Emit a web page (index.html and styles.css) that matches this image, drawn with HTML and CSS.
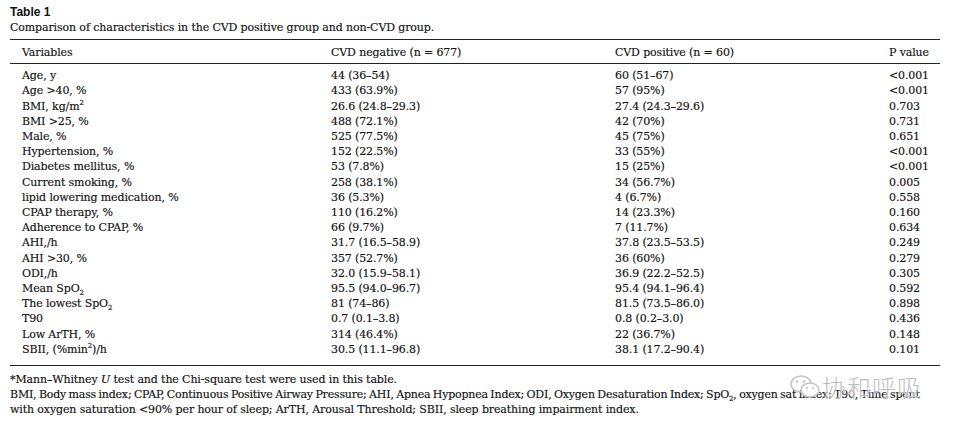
FILE: index.html
```html
<!DOCTYPE html>
<html>
<head>
<meta charset="utf-8">
<link rel="stylesheet" href="styles.css">
</head>
<body>
<div class="page">
  <div class="title">Table 1</div>
  <div class="caption">Comparison of characteristics in the CVD positive group and non-CVD group.</div>
  <table class="data">
    <colgroup>
      <col class="c1"><col class="c2"><col class="c3"><col class="c4">
    </colgroup>
    <thead>
      <tr><th>Variables</th><th>CVD negative (n = 677)</th><th>CVD positive (n = 60)</th><th>P value</th></tr>
    </thead>
    <tbody>
      <tr class="first"><td>Age, y</td><td>44 (36–54)</td><td>60 (51–67)</td><td>&lt;0.001</td></tr>
      <tr><td>Age &gt;40, %</td><td>433 (63.9%)</td><td>57 (95%)</td><td>&lt;0.001</td></tr>
      <tr><td>BMI, kg/m<sup>2</sup></td><td>26.6 (24.8–29.3)</td><td>27.4 (24.3–29.6)</td><td>0.703</td></tr>
      <tr><td>BMI &gt;25, %</td><td>488 (72.1%)</td><td>42 (70%)</td><td>0.731</td></tr>
      <tr><td>Male, %</td><td>525 (77.5%)</td><td>45 (75%)</td><td>0.651</td></tr>
      <tr><td>Hypertension, %</td><td>152 (22.5%)</td><td>33 (55%)</td><td>&lt;0.001</td></tr>
      <tr><td>Diabetes mellitus, %</td><td>53 (7.8%)</td><td>15 (25%)</td><td>&lt;0.001</td></tr>
      <tr><td>Current smoking, %</td><td>258 (38.1%)</td><td>34 (56.7%)</td><td>0.005</td></tr>
      <tr><td>lipid lowering medication, %</td><td>36 (5.3%)</td><td>4 (6.7%)</td><td>0.558</td></tr>
      <tr><td>CPAP therapy, %</td><td>110 (16.2%)</td><td>14 (23.3%)</td><td>0.160</td></tr>
      <tr><td>Adherence to CPAP, %</td><td>66 (9.7%)</td><td>7 (11.7%)</td><td>0.634</td></tr>
      <tr><td>AHI,/h</td><td>31.7 (16.5–58.9)</td><td>37.8 (23.5–53.5)</td><td>0.249</td></tr>
      <tr><td>AHI &gt;30, %</td><td>357 (52.7%)</td><td>36 (60%)</td><td>0.279</td></tr>
      <tr><td>ODI,/h</td><td>32.0 (15.9–58.1)</td><td>36.9 (22.2–52.5)</td><td>0.305</td></tr>
      <tr><td>Mean SpO<sub>2</sub></td><td>95.5 (94.0–96.7)</td><td>95.4 (94.1–96.4)</td><td>0.592</td></tr>
      <tr><td>The lowest SpO<sub>2</sub></td><td>81 (74–86)</td><td>81.5 (73.5–86.0)</td><td>0.898</td></tr>
      <tr><td>T90</td><td>0.7 (0.1–3.8)</td><td>0.8 (0.2–3.0)</td><td>0.436</td></tr>
      <tr><td>Low ArTH, %</td><td>314 (46.4%)</td><td>22 (36.7%)</td><td>0.148</td></tr>
      <tr class="last"><td>SBII, (%min<sup>2</sup>)/h</td><td>30.5 (11.1–96.8)</td><td>38.1 (17.2–90.4)</td><td>0.101</td></tr>
    </tbody>
  </table>
  <div class="notes">
    <p>*Mann–Whitney <i>U</i> test and the Chi-square test were used in this table.</p>
    <p><span class="line">BMI, Body mass index; CPAP, Continuous Positive Airway Pressure; AHI, Apnea Hypopnea Index; ODI, Oxygen Desaturation Index; SpO<sub>2</sub>, oxygen sat index; T90, Time spent</span><br>with oxygen saturation &lt;90% per hour of sleep; ArTH, Arousal Threshold; SBII, sleep breathing impairment index.</p>
    <div class="watermark">
      <svg class="wm-logo" width="30" height="24" viewBox="0 0 30 24">
        <ellipse cx="11" cy="9" rx="10" ry="8" fill="none" stroke="#c4c4c4" stroke-width="1.5"/>
        <ellipse cx="20" cy="15" rx="9" ry="7" fill="#fff" stroke="#c4c4c4" stroke-width="1.5"/>
        <circle cx="7" cy="6.5" r="1.3" fill="#c4c4c4"/>
        <circle cx="14" cy="6.5" r="1.3" fill="#c4c4c4"/>
        <circle cx="17" cy="13" r="1.1" fill="#c4c4c4"/>
        <circle cx="23" cy="13" r="1.1" fill="#c4c4c4"/>
      </svg>
      <span class="wm-text">协和呼吸</span>
    </div>
  </div>
</div>
</body>
</html>
```

FILE: styles.css
```css
html, body {
  margin: 0;
  padding: 0;
  background: #ffffff;
}
.page {
  width: 930px;
  padding: 5px 0 0 10px;
  font-family: "DejaVu Serif", "Liberation Serif", serif;
  color: #111;
  letter-spacing: -0.12px;
  -webkit-text-stroke: 0.15px #111;
}
.title {
  font-weight: bold;
  font-size: 12px;
  line-height: 14px;
  letter-spacing: 0;
  font-family: "Liberation Sans", "DejaVu Sans", sans-serif;
  -webkit-text-stroke: 0;
}
.caption {
  font-size: 11px;
  line-height: 15px;
  margin-top: 1px;
}
.data {
  width: 930px;
  border-collapse: collapse;
  table-layout: fixed;
  margin-top: 4px;
  font-size: 11px;
  border-top: 1.5px solid #222;
  border-bottom: 1.5px solid #222;
}
.c1 { width: 321px; }
.c2 { width: 284px; }
.c3 { width: 274px; }
.c4 { width: 51px; }
th, td {
  text-align: left;
  font-weight: normal;
  padding: 0;
  white-space: nowrap;
  line-height: 15.2px;
}
th {
  padding: 5px 0 3px 0;
  border-bottom: 1.5px solid #222;
}
th:first-child, td:first-child {
  padding-left: 12px;
}
tr.first td { padding-top: 4px; }
tr.last td { padding-bottom: 8px; }
sup, sub {
  font-size: 7px;
  line-height: 0;
}
.notes {
  position: relative;
  font-size: 11px;
  line-height: 15px;
  margin-top: 6px;
}
.notes p { margin: 0; }
.line {
  white-space: nowrap;
  letter-spacing: -0.2px;
  word-spacing: -0.8px;
}
.watermark {
  position: absolute;
  left: 780px;
  top: 3px;
  display: flex;
  align-items: center;
  gap: 2px;
  letter-spacing: 0;
  -webkit-text-stroke: 0;
}
.wm-text {
  font-family: "Noto Sans CJK SC", sans-serif;
  font-size: 24px;
  font-weight: 300;
  color: rgba(160,160,160,0.7);
  text-shadow: 0 0 2px #fff, 0 0 2px #fff;
  letter-spacing: 1px;
  line-height: 24px;
}
```
